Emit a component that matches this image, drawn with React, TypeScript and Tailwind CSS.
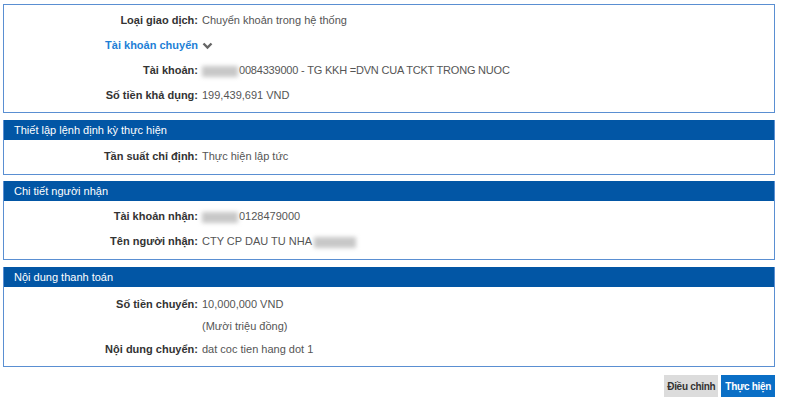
import React from "react";

const Blur = ({ w }: { w: number }) => (
  <span
    className="inline-block h-[11px] bg-[#c8c8c8] blur-[2px] align-middle mr-[1px]"
    style={{ width: w }}
  />
);

const Row = ({
  label,
  children,
  h = "h-[25px]",
}: {
  label?: React.ReactNode;
  children?: React.ReactNode;
  h?: string;
}) => (
  <div className={`flex items-center ${h}`}>
    <div className="w-[194px] shrink-0 text-right font-bold text-[#333]">{label}</div>
    <div className="pl-[4px] text-[#555]">{children}</div>
  </div>
);

const Header = ({ title }: { title: string }) => (
  <div className="h-[20px] bg-[#0256a5] text-white flex items-center pl-[10px] text-[11px]">{title}</div>
);

export default function App() {
  return (
    <div
      className="w-[789px] h-[411px] bg-white pl-[3px] pt-[4px] text-[11px] leading-[13px]"
      style={{ fontFamily: "Arial, 'Liberation Sans', sans-serif" }}
    >
      <div className="w-[772px] flex flex-col">
        <div className="border border-[#5a8fd2] pt-[3px] pb-[4px]">
          <Row label="Loại giao dịch:">Chuyển khoản trong hệ thống</Row>
          <Row
            label={<span className="text-[#1e7fd6]">Tài khoản chuyển</span>}
          >
            <svg width="11" height="8" viewBox="0 0 11 8" className="inline-block">
              <path d="M1.5 1.5 L5.5 5.5 L9.5 1.5" stroke="#666" strokeWidth="2.4" fill="none" />
            </svg>
          </Row>
          <Row label="Tài khoản:">
            <Blur w={36} />
            <span className="tracking-[-0.2px]">0084339000 - TG KKH =DVN CUA TCKT TRONG NUOC</span>
          </Row>
          <Row label="Số tiền khả dụng:">199,439,691 VND</Row>
        </div>

        <div className="mt-[7px] border border-[#5a8fd2] border-t-0">
          <Header title="Thiết lập lệnh định kỳ thực hiện" />
          <div className="pt-[4px] pb-[5px]">
            <Row label="Tần suất chỉ định:">Thực hiện lập tức</Row>
          </div>
        </div>

        <div className="mt-[6px] border border-[#5a8fd2] border-t-0">
          <Header title="Chi tiết người nhận" />
          <div className="pt-[3px] pb-[5px]">
            <Row label="Tài khoản nhận:">
              <Blur w={36} />
              0128479000
            </Row>
            <Row label="Tên người nhận:">
              CTY CP DAU TU NHA <Blur w={42} />
            </Row>
          </div>
        </div>

        <div className="mt-[7px] border border-[#5a8fd2] border-t-0">
          <Header title="Nội dung thanh toán" />
          <div className="pt-[6px] pb-[4px]">
            <Row label="Số tiền chuyển:" h="h-[22px]">10,000,000 VND</Row>
            <Row h="h-[22px]">(Mười triệu đồng)</Row>
            <Row label="Nội dung chuyển:">dat coc tien hang dot 1</Row>
          </div>
        </div>

        <div className="mt-[8px] flex justify-end gap-[3px]">
          <button className="h-[22px] px-[3px] bg-[#dcdcdc] text-[#333] font-bold text-[10px] tracking-[-0.3px]">Điều chỉnh</button>
          <button className="h-[22px] px-[4px] bg-[#0a6fc6] text-white font-bold text-[10px] tracking-[-0.3px]">Thực hiện</button>
        </div>
      </div>
    </div>
  );
}
